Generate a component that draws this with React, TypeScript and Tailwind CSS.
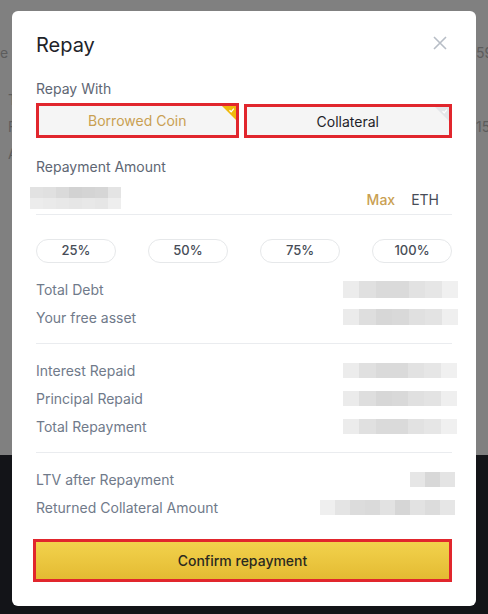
import React from "react";

const font = { fontFamily: "Inter, 'Noto Sans', sans-serif" };

type BlurProps = { rows: string[][]; cell: number; h: number; className?: string };

function Blur({ rows, cell, h, className = "" }: BlurProps) {
  return (
    <div className={`flex flex-col ${className}`}>
      {rows.map((row, i) => (
        <div key={i} className="flex">
          {row.map((c, j) => (
            <div key={j} style={{ width: cell, height: h, backgroundColor: c }} />
          ))}
        </div>
      ))}
    </div>
  );
}

function Corner({ active }: { active: boolean }) {
  return (
    <svg className="absolute top-0 right-0" width="14" height="14" viewBox="0 0 14 14">
      <path d="M0 0 H14 V14 Z" fill={active ? "#f0b90b" : "#e4e6e9"} />
      <path d="M7.5 4.2 L9.2 5.8 L11.8 2.6" stroke="#fff" strokeWidth="1.2" fill="none" />
    </svg>
  );
}

function InfoRow({ label, children }: { label: string; children?: React.ReactNode }) {
  return (
    <div className="flex items-center justify-between h-5">
      <span className="text-[14px] text-[#707a8a]">{label}</span>
      {children}
    </div>
  );
}

const debt = ["#ececec", "#e0e0e0", "#dadada", "#dadada", "#e2e2e2", "#e6e6e6", "#f0f0f0"];
const free = ["#ebebeb", "#dedede", "#d7d7d7", "#d9d9d9", "#e0e0e0", "#e3e3e3", "#efefef"];

export default function App() {
  return (
    <div className="relative w-[488px] h-[614px] overflow-hidden" style={font}>
      {/* page behind the overlay */}
      <div className="h-[455px] bg-[#808080] flex flex-col text-[14px] text-[#5c5c5c]">
        <div className="flex justify-between mt-[42px]">
          <span className="w-[12px] overflow-hidden whitespace-nowrap">e B</span>
          <span className="w-[12px] overflow-hidden whitespace-nowrap">59</span>
        </div>
        <div className="flex flex-col gap-[6px] mt-[26px] ml-[8px]">
          <span className="w-[4px] overflow-hidden">T</span>
          <div className="flex justify-between">
            <span className="w-[4px] overflow-hidden">F</span>
            <span className="w-[12px] overflow-hidden whitespace-nowrap">15</span>
          </div>
          <span className="w-[4px] overflow-hidden">A</span>
        </div>
      </div>
      <div className="h-[159px] bg-[#131418]" />

      {/* modal */}
      <div className="absolute left-[12px] top-[11px] w-[464px] h-[595px] bg-white rounded-[6px] px-6 pt-5">
        <div className="flex items-center justify-between h-7">
          <h2 className="text-[20px] text-[#1e2329]">Repay</h2>
          <svg width="14" height="14" viewBox="0 0 14 14" className="mr-[5px] -mt-[4px]">
            <path d="M1 1 L13 13 M13 1 L1 13" stroke="#b7bdc6" strokeWidth="1.6" />
          </svg>
        </div>

        <div className="mt-5 h-5 text-[14px] text-[#5e6673] leading-5">Repay With</div>
        <div className="flex gap-[5px] mt-1">
          <button className="relative w-[204px] h-[35px] border-[3px] border-[#e1262d] bg-[#f5f5f5] text-[14px] text-[#c9a052]">
            Borrowed Coin
            <Corner active />
          </button>
          <button className="relative w-[210px] h-[34px] mt-[1px] border-[3px] border-[#e1262d] bg-[#f5f5f5] text-[14px] text-[#1e2329]">
            Collateral
            <Corner active={false} />
          </button>
        </div>

        <div className="mt-[19px] h-5 text-[14px] text-[#5e6673] leading-5">Repayment Amount</div>
        <div className="mt-[7px] h-[31px] flex items-center justify-between border-b border-[#eaecef]">
          <Blur
            className="-ml-[6px] -mt-[2px]"
            cell={13}
            h={11}
            rows={[
              ["#e2e2e2", "#e0e0e0", "#dadada", "#d2d2d2", "#d4d4d4", "#d6d6d6", "#e4e4e4"],
              ["#ececec", "#eaeaea", "#e8e8e8", "#e6e6e6", "#e8e8e8", "#e6e6e6", "#eeeeee"],
            ]}
          />
          <div className="flex items-center gap-[16px] pr-[13px] text-[14px]">
            <span className="font-medium text-[#c9a052]">Max</span>
            <span className="text-[#474d57]">ETH</span>
          </div>
        </div>

        <div className="mt-[24px] flex justify-between">
          {["25%", "50%", "75%", "100%"].map((p) => (
            <button
              key={p}
              className="w-20 h-6 rounded-full border border-[#e6e8ea] text-[13px] font-medium text-[#474d57]"
            >
              {p}
            </button>
          ))}
        </div>

        <div className="mt-4 flex flex-col gap-2">
          <InfoRow label="Total Debt">
            <Blur className="-mr-[6px]" cell={16.5} h={17} rows={[debt]} />
          </InfoRow>
          <InfoRow label="Your free asset">
            <Blur className="-mr-[6px]" cell={16.5} h={16} rows={[free]} />
          </InfoRow>
        </div>

        <div className="mt-4 border-t border-[#eaecef]" />

        <div className="mt-4 flex flex-col gap-2">
          <InfoRow label="Interest Repaid">
            <Blur className="-mr-[5px]" cell={16.3} h={15} rows={[debt]} />
          </InfoRow>
          <InfoRow label="Principal Repaid">
            <Blur className="-mr-[5px]" cell={16.3} h={15} rows={[free]} />
          </InfoRow>
          <InfoRow label="Total Repayment">
            <Blur className="-mr-[5px]" cell={16.3} h={15} rows={[debt]} />
          </InfoRow>
        </div>

        <div className="mt-4 border-t border-[#eaecef]" />

        <div className="mt-4 flex flex-col gap-2">
          <InfoRow label="LTV after Repayment">
            <Blur className="-mr-[3px]" cell={15} h={15} rows={[["#e6e6e6", "#d8d8d8", "#e4e4e4"]]} />
          </InfoRow>
          <InfoRow label="Returned Collateral Amount">
            <Blur
              className="-mr-[3px]"
              cell={15}
              h={15}
              rows={[["#efefef", "#e4e4e4", "#dcdcdc", "#dadada", "#e2e2e2", "#d6d6d6", "#e2e2e2", "#dcdcdc", "#e6e6e6"]]}
            />
          </InfoRow>
        </div>

        <button className="mt-[22px] -ml-[3px] w-[419px] h-[43px] border-[3px] border-[#e1262d] bg-gradient-to-b from-[#f2d24c] to-[#e4bb32] text-[14px] font-medium text-[#2b2a1f]">
          Confirm repayment
        </button>
      </div>
    </div>
  );
}
